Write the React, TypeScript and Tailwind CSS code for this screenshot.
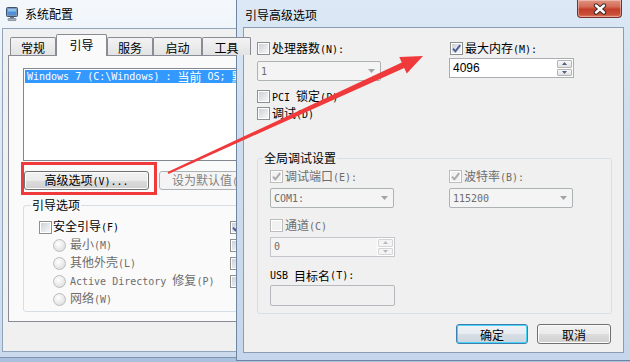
import React from "react";

function T({ s }: { s: string }) {
  const parts = s.split(/([\x20-\x7e]+)/).filter((p) => p.length > 0);
  return (
    <>
      {parts.map((p, i) =>
        /^[\x20-\x7e]+$/.test(p) ? (
          <span key={i} className="font-['DejaVu_Sans_Mono',monospace] text-[10px]">
            {p}
          </span>
        ) : (
          <span key={i}>{p}</span>
        )
      )}
    </>
  );
}

function Box({ checked = false, disabled = false }: { checked?: boolean; disabled?: boolean }) {
  return (
    <span
      className={`relative flex h-[13px] w-[13px] shrink-0 items-center justify-center border bg-white ${
        disabled ? "border-[#bcbcbc]" : "border-[#8e8f8f]"
      }`}
    >
      <span
        className={`h-[9px] w-[9px] ${
          disabled ? "bg-[#f1f1f1]" : "bg-[linear-gradient(135deg,#cdd1d7,#f7f7f7)]"
        }`}
      />
      {checked && (
        <svg className="absolute left-0 top-0" width="11" height="11" viewBox="0 0 11 11">
          <path
            d="M2 5.6 L4.4 8.3 L9.2 2.2"
            fill="none"
            stroke={disabled ? "#a9a9a9" : "#4a5d97"}
            strokeWidth="1.9"
          />
        </svg>
      )}
    </span>
  );
}

function Radio() {
  return (
    <span className="h-[13px] w-[13px] shrink-0 rounded-full border border-[#bdbdbd] bg-[radial-gradient(circle_at_40%_35%,#ffffff_0%,#e9e9e9_55%,#d6d6d6_100%)]" />
  );
}

function Combo({ text }: { text: string }) {
  return (
    <div className="flex h-[20px] w-[124px] items-center justify-between rounded-[2px] border border-[#adb2b5] bg-[#f4f4f4] pl-[3px] pr-[5px] text-[#6d6d6d]">
      <span className="whitespace-pre leading-[12px]">
        <T s={text} />
      </span>
      <svg width="7" height="4" viewBox="0 0 7 4">
        <path d="M0 0 H7 L3.5 4 Z" fill="#a3a3a3" />
      </svg>
    </div>
  );
}

function Spin({ value, disabled = false }: { value: string; disabled?: boolean }) {
  const tri = disabled ? "#b9b9b9" : "#4d6185";
  return (
    <div
      className={`flex h-[20px] w-[125px] border ${
        disabled ? "border-[#c3c6ca] bg-[#f4f4f4] text-[#6d6d6d]" : "border-[#abadb3] bg-white text-black"
      }`}
    >
      <div className="flex flex-1 items-center pl-[3px] leading-[12px]">
        {disabled ? (
          <T s={value} />
        ) : (
          <span className="font-['Liberation_Sans',sans-serif] text-[12px]">{value}</span>
        )}
      </div>
      <div className="flex w-[17px] flex-col gap-px bg-white p-px">
        <div
          className={`flex flex-1 items-center justify-center rounded-[1px] border ${
            disabled ? "border-[#d5d5d5] bg-[#f4f4f4]" : "border-[#b4b4b4] bg-[linear-gradient(#f8f8f8,#e2e2e2)]"
          }`}
        >
          <svg width="5" height="3" viewBox="0 0 5 3">
            <path d="M0 3 L2.5 0 L5 3 Z" fill={tri} />
          </svg>
        </div>
        <div
          className={`flex flex-1 items-center justify-center rounded-[1px] border ${
            disabled ? "border-[#d5d5d5] bg-[#f4f4f4]" : "border-[#b4b4b4] bg-[linear-gradient(#f8f8f8,#e2e2e2)]"
          }`}
        >
          <svg width="5" height="3" viewBox="0 0 5 3">
            <path d="M0 0 L5 0 L2.5 3 Z" fill={tri} />
          </svg>
        </div>
      </div>
    </div>
  );
}

function CheckRow({
  label,
  checked = false,
  disabled = false,
  grey = false,
}: {
  label: string;
  checked?: boolean;
  disabled?: boolean;
  grey?: boolean;
}) {
  return (
    <div className="flex h-[13px] items-center gap-[2px]">
      <Box checked={checked} disabled={disabled} />
      <span className={`whitespace-pre leading-[12px] ${grey ? "text-[#6d6d6d]" : "text-black"}`}>
        <T s={label} />
      </span>
    </div>
  );
}

function ConfigIcon() {
  return (
    <svg width="16" height="16" viewBox="0 0 16 16">
      <rect x="1.5" y="1.5" width="11" height="9" rx="1" fill="#7e95b3" stroke="#3f536e" />
      <rect x="3" y="3" width="8" height="6" fill="#4f8fd6" />
      <rect x="3" y="3" width="8" height="2.5" fill="#8cc0ee" />
      <rect x="5" y="11" width="4" height="1.5" fill="#6f7b8a" />
      <rect x="3" y="12.5" width="8" height="2" rx="0.5" fill="#a9b3bf" stroke="#5f6a78" strokeWidth="0.6" />
    </svg>
  );
}

function Tab({ w, children }: { w: string; children: React.ReactNode }) {
  return (
    <div
      className={`flex h-[18px] ${w} items-center justify-center rounded-t-[2px] border border-b-0 border-[#898c95] bg-[linear-gradient(#f3f3f3,#e3e3e3)] pt-[2px]`}
    >
      {children}
    </div>
  );
}

function LeftWindow() {
  return (
    <div className="absolute left-0 top-0 flex h-[358px] w-[430px] flex-col border-b border-[#7f93ad] bg-[linear-gradient(180deg,#f4f8fc_0%,#dfe9f5_35%,#cbdaec_100%)] pb-[5px] pl-[2px]">
      <div className="flex h-[28px] shrink-0 items-center gap-[4px] pl-[3px]">
        <ConfigIcon />
        <span className="pb-[1px]">系统配置</span>
      </div>
      <div className="flex flex-1 flex-col border border-[#8fa3bb] bg-[#f0f0f0] pl-[5px] pt-[5px]">
        <div className="relative z-10 flex h-[21px] items-end pl-[2px]">
          <Tab w="w-[46px]">常规</Tab>
          <div className="-mb-px flex h-[22px] w-[51px] items-center justify-center rounded-t-[2px] border border-b-0 border-[#898c95] bg-[#fafafa] pb-[2px]">
            引导
          </div>
          <Tab w="w-[46px]">服务</Tab>
          <Tab w="w-[49px]">启动</Tab>
          <Tab w="w-[49px]">工具</Tab>
        </div>
        <div className="flex h-[267px] w-[400px] flex-col border border-[#898c95] bg-[#fafafa]">
          <div className="ml-[14px] mt-[12px] h-[93px] w-[380px] border border-[#828790] bg-white pl-px pt-px">
            <div className="flex h-[13px] items-center whitespace-pre bg-[#3399ff] pl-[2px] leading-[12px] text-white">
              <T s={"Windows 7 (C:\\Windows) : 当前 OS; 默认 OS"} />
            </div>
          </div>
          <div className="ml-[15px] mt-[10px] flex gap-[10px]">
            <div className="flex h-[19px] w-[125px] items-center justify-center rounded-[3px] border border-[#707070] bg-[linear-gradient(#f2f2f2_0%,#ebebeb_50%,#dddddd_50%,#cfcfcf_100%)] shadow-[inset_0_0_0_1px_#fcfcfc]">
              <span className="whitespace-pre leading-[12px]">
                <T s="高级选项(V)..." />
              </span>
            </div>
            <div className="flex h-[19px] w-[104px] items-center justify-center rounded-[3px] border border-[#adb2b5] bg-[#f4f4f4] text-[#838383]">
              <span className="whitespace-pre leading-[12px]">
                <T s="设为默认值(D)" />
              </span>
            </div>
          </div>
          <fieldset className="ml-[14px] mt-[7px] w-[380px] rounded-[3px] border border-[#d5dfe5]">
            <legend className="ml-[7px] px-px leading-[16px]">引导选项</legend>
            <div className="grid grid-cols-[191px_1fr] pb-[3px] pl-[15px] pt-[5px]">
              <div className="flex flex-col">
                <div className="flex h-[18px] items-center gap-[1px]">
                  <Box />
                  <span className="whitespace-pre leading-[12px]">
                    <T s="安全引导(F)" />
                  </span>
                </div>
                {["最小(M)", "其他外壳(L)", "Active Directory 修复(P)", "网络(W)"].map((l) => (
                  <div key={l} className="flex h-[18px] items-center gap-[4px] pl-[14px] text-[#6d6d6d]">
                    <Radio />
                    <span className="whitespace-pre leading-[12px]">
                      <T s={l} />
                    </span>
                  </div>
                ))}
              </div>
              <div className="flex flex-col">
                {["无 GUI 引导(N)", "引导日志(B)", "基本视频(E)", "OS 引导信息(O)"].map((l, i) => (
                  <div key={l} className="flex h-[18px] items-center gap-[1px]">
                    <Box checked={i === 0} />
                    <span className="whitespace-pre leading-[12px]">
                      <T s={l} />
                    </span>
                  </div>
                ))}
              </div>
            </div>
          </fieldset>
        </div>
      </div>
    </div>
  );
}

function CloseButton() {
  return (
    <div className="absolute left-[340px] top-0 flex h-[18px] w-[45px] items-center justify-center rounded-b-[4px] border border-t-0 border-[#7a3026] bg-[linear-gradient(180deg,#e39482_0%,#d36a56_40%,#c23d28_55%,#cb5039_85%,#dc7c62_100%)] shadow-[inset_0_0_0_1px_rgba(255,255,255,0.35)]">
      <svg width="16" height="12" viewBox="0 0 16 12">
        <path d="M4 2.5 L12 9.5 M12 2.5 L4 9.5" stroke="#3b2a2a" strokeWidth="4.4" strokeLinecap="round" />
        <path d="M4 2.5 L12 9.5 M12 2.5 L4 9.5" stroke="#ffffff" strokeWidth="2.4" strokeLinecap="round" />
      </svg>
    </div>
  );
}

function RightDialog() {
  return (
    <div className="absolute left-[236px] top-0 flex h-[361px] w-[400px] flex-col border-b border-l border-[#6f86a3] bg-[linear-gradient(180deg,#dce8f5_0%,#d0dfef_30%,#c6d7eb_100%)]">
      <div className="relative flex h-[27px] shrink-0 items-center pl-[8px]">
        <span className="pt-[1px]">引导高级选项</span>
        <CloseButton />
      </div>
      <div className="ml-[6px] flex h-[326px] w-[381px] flex-col border border-[#8a9db5] bg-[#f0f0f0] pl-[13px] pt-[14px]">
        <div className="grid grid-cols-[192px_1fr]">
          <div className="flex flex-col">
            <CheckRow label="处理器数(N):" />
            <div className="mt-[6px]">
              <Combo text="1" />
            </div>
            <div className="mt-[9px]">
              <CheckRow label="PCI 锁定(P)" />
            </div>
            <div className="mt-[4px]">
              <CheckRow label="调试(D)" />
            </div>
          </div>
          <div className="flex flex-col">
            <div className="pl-px">
              <CheckRow label="最大内存(M):" checked />
            </div>
            <div className="mt-[3px]">
              <Spin value="4096" />
            </div>
          </div>
        </div>
        <fieldset className="mt-[30px] w-[355px] rounded-[3px] border border-[#d5dfe5]">
          <legend className="ml-[5px] px-px leading-[16px]">全局调试设置</legend>
          <div className="grid grid-cols-[179px_1fr] pb-[7px] pl-[12px] pt-[4px]">
            <div className="flex flex-col">
              <CheckRow label="调试端口(E):" checked disabled grey />
              <div className="mt-[5px]">
                <Combo text="COM1:" />
              </div>
              <div className="mt-[11px]">
                <CheckRow label="通道(C)" disabled grey />
              </div>
              <div className="mt-[5px]">
                <Spin value="0" disabled />
              </div>
              <div className="mt-[12px] flex h-[13px] items-center whitespace-pre leading-[12px]">
                <T s="USB 目标名(T):" />
              </div>
              <div className="mt-[3px] h-[21px] w-[125px] rounded-[2px] border border-[#b5b9bd] bg-[#f0f0f0]" />
            </div>
            <div className="flex flex-col">
              <CheckRow label="波特率(B):" checked disabled grey />
              <div className="mt-[5px]">
                <Combo text="115200" />
              </div>
            </div>
          </div>
        </fieldset>
        <div className="mt-[10px] flex justify-end gap-[9px] pr-[12px]">
          <div className="flex h-[20px] w-[72px] items-center justify-center rounded-[3px] border border-[#3c7fb1] bg-[linear-gradient(#f0f3f6_0%,#e7ecf1_50%,#d8dfe6_50%,#ccd5de_100%)] shadow-[inset_0_0_0_1px_#4ad3f5]">
            确定
          </div>
          <div className="flex h-[20px] w-[74px] items-center justify-center rounded-[3px] border border-[#707070] bg-[linear-gradient(#f2f2f2_0%,#ebebeb_50%,#dddddd_50%,#cfcfcf_100%)] shadow-[inset_0_0_0_1px_#fcfcfc]">
            取消
          </div>
        </div>
      </div>
    </div>
  );
}

function Annotations() {
  return (
    <>
      <div className="pointer-events-none absolute left-[21px] top-[162px] h-[33px] w-[136px] border-[3px] border-[#f0393b]" />
      <svg className="pointer-events-none absolute left-0 top-0" width="630" height="362" viewBox="0 0 630 362">
        <polygon
          points="167.6,172.1 401.75,62.5 399.25,57 423,56 406.75,73.4 404.25,67.9 168.4,173.9"
          fill="#f0393b"
        />
      </svg>
    </>
  );
}

export default function App() {
  return (
    <div className="relative h-[362px] w-[630px] overflow-hidden bg-[#a9c1de] font-['Noto_Sans_CJK_SC',sans-serif] text-[12px] leading-[13px] text-black">
      <LeftWindow />
      <RightDialog />
      <Annotations />
    </div>
  );
}
